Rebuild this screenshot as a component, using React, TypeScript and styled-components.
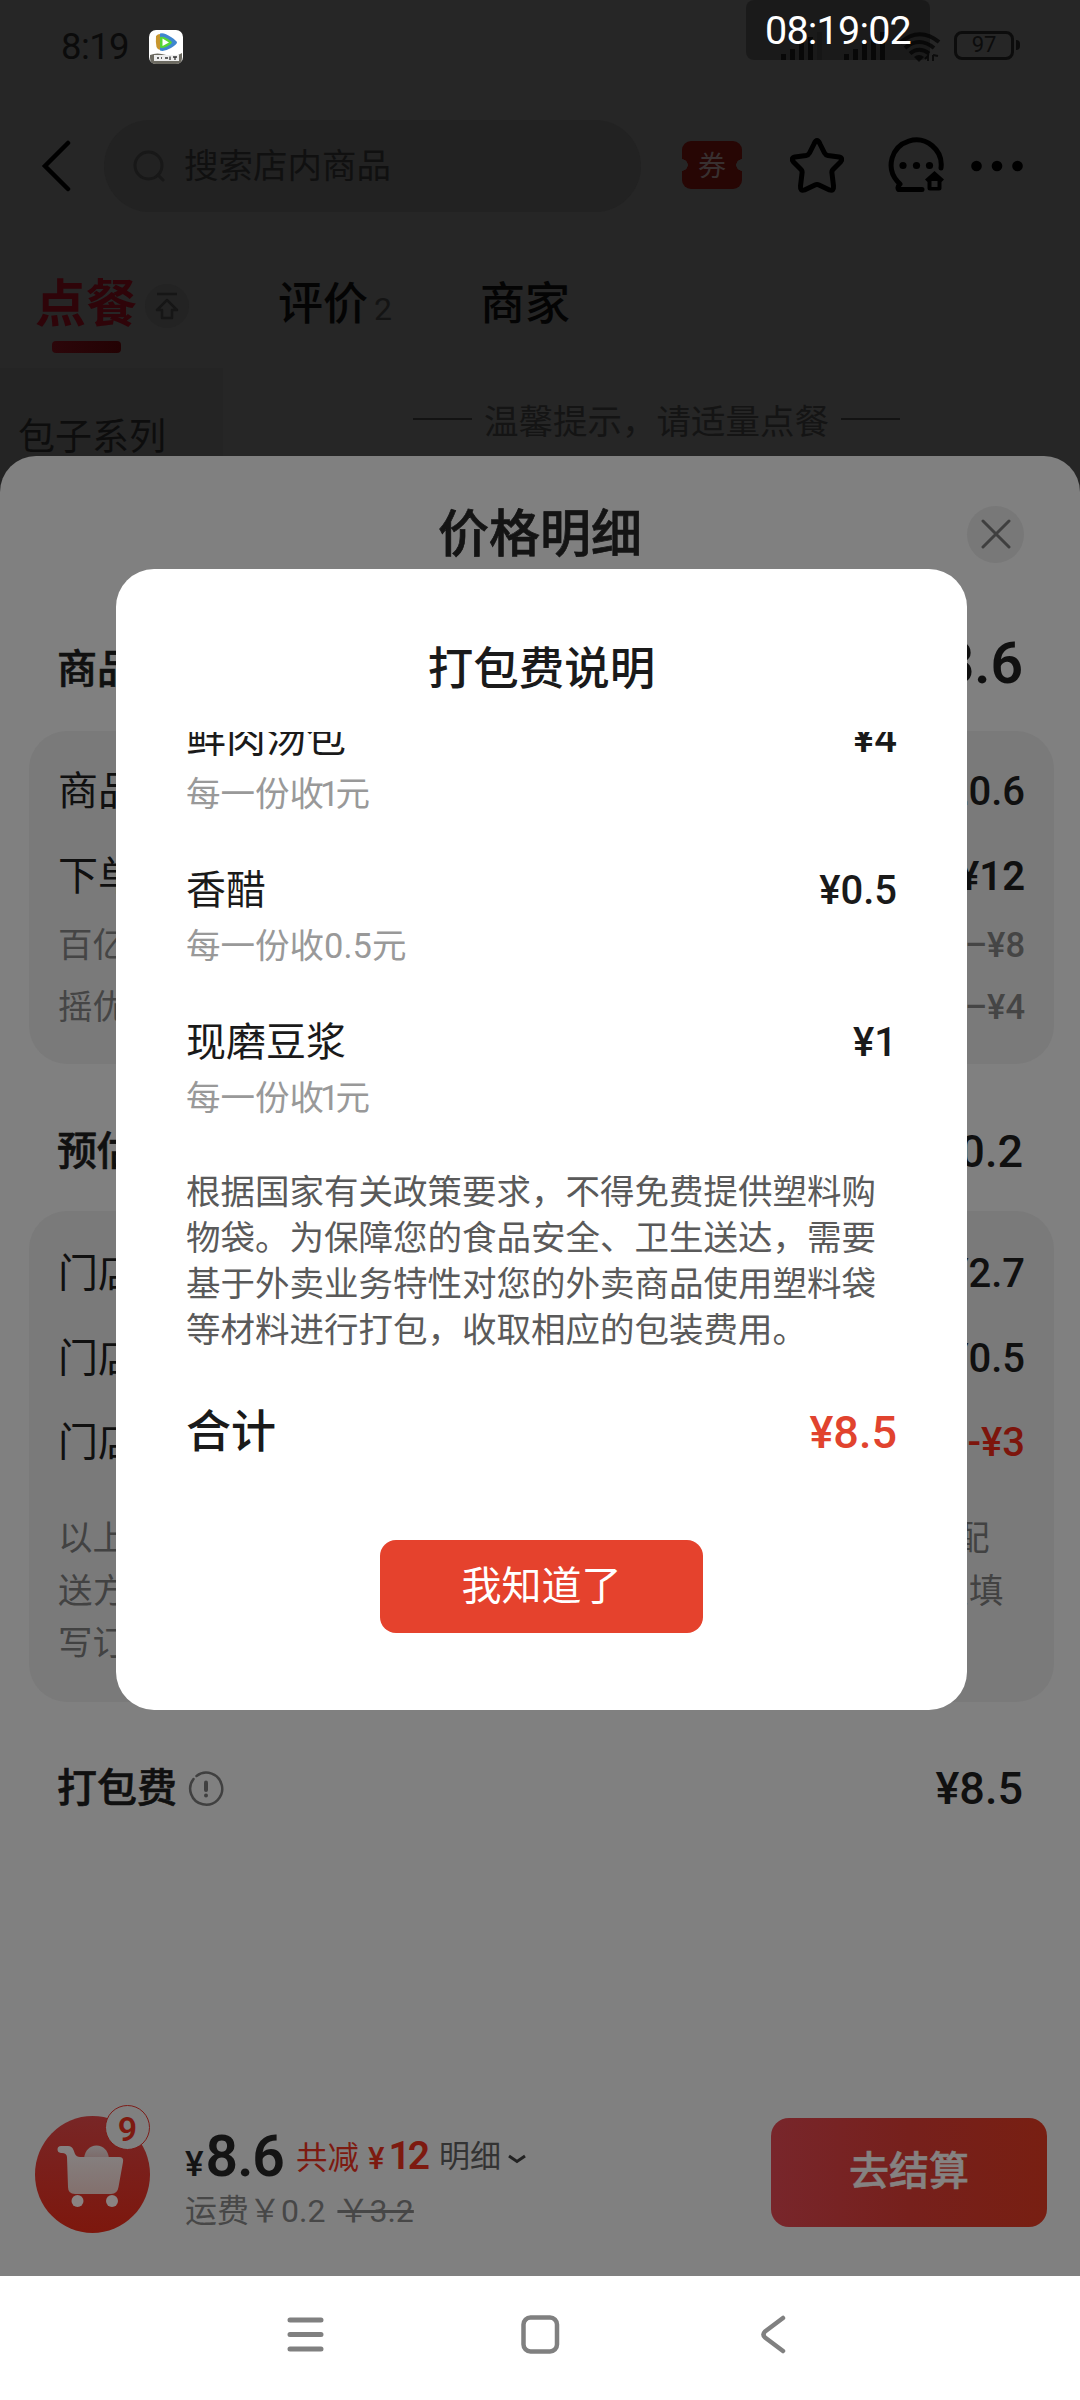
import React from 'react';
import styled, { createGlobalStyle } from 'styled-components';

const GlobalStyle = createGlobalStyle`
  * { box-sizing: border-box; }
  body { margin: 0; background: #262626; }
  svg { display: block; flex: none; }
`;

const Screen = styled.div`
  position: relative;
  width: 1080px;
  height: 2400px;
  overflow: hidden;
  display: flex;
  flex-direction: column;
  background: #262626;
  font-family: Roboto, 'Noto Sans CJK SC', sans-serif;
  color: #141414;
  white-space: nowrap;
`;

/* ---------- store page under the sheet ---------- */

const StatusBar = styled.div`
  height: 94px;
  padding: 0 60px 0 61px;
  display: flex;
  align-items: center;
`;
const Clock = styled.span`
  width: 88px;
  font-size: 36.5px;
  letter-spacing: -0.6px;
  line-height: 94px;
  color: #0b0b0b;
`;
const StatusRight = styled.div`
  margin-left: auto;
  display: flex;
  align-items: center;
`;
const SignalIcons = styled.svg`
  margin-right: 13px;
`;
const Battery = styled.div`
  width: 60px;
  height: 29px;
  margin-top: -4px;
  border: 3px solid #0c0c0c;
  border-radius: 8px;
  display: flex;
  justify-content: center;
  align-items: center;
  font-size: 22px;
  line-height: 24px;
  color: #0c0c0c;
`;
const BatteryTip = styled.div`
  width: 4px;
  height: 10px;
  margin: -4px 0 0 2px;
  border-radius: 0 4px 4px 0;
  background: #0c0c0c;
`;
const TimeChip = styled.div`
  position: absolute;
  left: 746px;
  top: 0;
  width: 184px;
  height: 60px;
  border-radius: 8px;
  background: rgba(0, 0, 0, 0.3);
  color: #fff;
  font-size: 39.5px;
  letter-spacing: -0.8px;
  line-height: 61px;
  text-align: center;
`;

const Header = styled.div`
  height: 144px;
  padding: 0 54px 0 41px;
  display: flex;
  align-items: center;
`;
const SearchBox = styled.div`
  width: 537px;
  height: 92px;
  margin-left: 32px;
  padding-left: 29px;
  border-radius: 46px;
  background: #222222;
  display: flex;
  align-items: center;
  gap: 19px;
  font-size: 34.5px;
  line-height: 92px;
  color: #101010;
`;
const Coupon = styled.div`
  width: 60px;
  height: 48px;
  margin: -3px 45px 0 41px;
  border-radius: 9px;
  background: radial-gradient(circle at 0 50%, #262626 5.5px, transparent 6px),
    radial-gradient(circle at 100% 50%, #262626 5.5px, transparent 6px), #270604;
  color: #383030;
  font-size: 28px;
  line-height: 52px;
  text-align: center;
`;

const Tabs = styled.div`
  height: 130px;
  padding-left: 35px;
  display: flex;
  align-items: flex-start;
  padding-top: 36px;
`;
const ActiveTab = styled.div`
  display: flex;
  flex-direction: column;
  font-size: 51px;
  font-weight: 700;
  line-height: 62px;
  color: #2f0409;
`;
const Underline = styled.div`
  width: 69px;
  height: 12px;
  margin: 5px 0 0 17px;
  border-radius: 4px;
  background: linear-gradient(90deg, #2c060a, #230203);
`;
const TopBadge = styled.div`
  width: 44px;
  height: 44px;
  margin: 10px 0 0 8px;
  border-radius: 50%;
  background: #232323;
  display: flex;
  align-items: center;
  justify-content: center;
`;
const Tab = styled.div<{ $gap: number }>`
  margin-left: ${p => p.$gap}px;
  font-size: 45px;
  font-weight: 500;
  line-height: 61px;
  color: #040404;
`;
const TabCount = styled.span`
  margin-left: 6px;
  font-size: 32px;
  font-weight: 400;
  color: #141414;
`;

const MenuArea = styled.div`
  height: 120px;
  display: flex;
`;
const Category = styled.div`
  width: 223px;
  padding: 39px 0 0 18px;
  background: #242424;
  font-size: 37px;
  line-height: 62px;
  color: #0d0d0d;
`;
const Tip = styled.div`
  margin-left: 190px;
  height: 101px;
  display: flex;
  align-items: center;
  gap: 12px;
  font-size: 34.5px;
  color: #141414;
`;
const TipLine = styled.div`
  width: 59px;
  height: 2px;
  background: #131313;
`;

/* ---------- price sheet ---------- */

const Sheet = styled.div`
  position: absolute;
  left: 0;
  top: 456px;
  width: 1080px;
  height: 1820px;
  border-radius: 36px 36px 0 0;
  background: #808080;
  display: flex;
  flex-direction: column;
`;
const SheetHead = styled.div`
  height: 156px;
  padding: 0 56px 0 113px;
  display: flex;
  align-items: center;
  justify-content: space-between;
`;
const SheetTitle = styled.div`
  flex: 1;
  text-align: center;
  font-size: 51px;
  font-weight: 500;
  -webkit-text-stroke: 0.7px;
  line-height: 159px;
`;
const CloseButton = styled.div`
  width: 57px;
  height: 57px;
  border-radius: 50%;
  background: #787878;
  display: flex;
  align-items: center;
  justify-content: center;
`;
const Line = styled.div<{
  $h: number;
  $size?: number;
  $bold?: boolean;
  $medium?: boolean;
  $inset?: number;
  $shift?: number;
  $color?: string;
}>`
  height: ${p => p.$h}px;
  margin-top: ${p => p.$shift ?? 0}px;
  margin-bottom: ${p => -(p.$shift ?? 0)}px;
  padding: 0 ${p => p.$inset ?? 0}px;
  flex: none;
  display: flex;
  align-items: center;
  font-size: ${p => p.$size ?? 40}px;
  font-weight: ${p => (p.$bold || p.$medium ? 500 : 400)};
  -webkit-text-stroke: ${p => (p.$bold ? '0.6px' : '0')};
  line-height: ${p => p.$h}px;
  color: ${p => p.$color ?? '#101010'};
`;
const Price = styled.span<{ $size?: number; $color?: string; $weight?: number; $lift?: number }>`
  margin-left: auto;
  padding-bottom: ${p => p.$lift ?? 0}px;
  font-size: ${p => p.$size ?? 40}px;
  font-weight: ${p => p.$weight ?? 500};
  -webkit-text-stroke: 0;
  color: ${p => p.$color ?? 'inherit'};
`;
const Card = styled.div<{ $h: number; $pad: number }>`
  width: 1025px;
  height: ${p => p.$h}px;
  margin-left: 29px;
  padding: ${p => p.$pad}px 29px 0 29px;
  border-radius: 38px;
  background: #7a7a7a;
`;
const Note = styled.div`
  margin-top: 27px;
  font-size: 34.5px;
  line-height: 52.5px;
  color: #424242;
`;
const NoteLine = styled.div<{ $track?: number }>`
  letter-spacing: ${p => p.$track ?? 0}px;
`;
const InfoMark = styled.svg`
  margin-left: 11px;
`;

const CartBar = styled.div`
  position: absolute;
  left: 0;
  bottom: 0;
  width: 1080px;
  height: 200px;
  padding: 0 33px 0 35px;
  display: flex;
`;
const CartButton = styled.div`
  position: relative;
  width: 115px;
  height: 117px;
  margin-top: 40px;
  border-radius: 50%;
  background: linear-gradient(#782626, #7d170d);
`;
const Badge = styled.div`
  position: absolute;
  left: 70px;
  top: -11px;
  width: 45px;
  height: 45px;
  border-radius: 50%;
  border: 1.5px solid #7d1c18;
  background: #808080;
  color: #7d1a10;
  font-size: 34px;
  font-weight: 600;
  line-height: 46px;
  text-align: center;
`;
const Totals = styled.div`
  margin-left: 35px;
  padding-top: 41px;
  display: flex;
  flex-direction: column;
`;
const TotalLine = styled.div`
  height: 80px;
  display: flex;
  align-items: baseline;
  line-height: 80px;
`;
const Yen = styled.span`
  font-size: 35px;
  font-weight: 500;
`;
const Total = styled.span`
  margin-left: 2px;
  font-size: 57px;
  font-weight: 600;
  letter-spacing: -1px;
`;
const Saved = styled.span`
  margin-left: 12px;
  position: relative;
  top: -7px;
  font-size: 31.5px;
  color: #7d1a10;
`;
const SavedAmount = styled.b`
  margin-left: 4px;
  font-size: 39px;
  font-weight: 600;
  letter-spacing: -3px;
`;
const SavedYen = styled.b`
  margin-left: 9px;
  font-size: 31px;
  font-weight: 500;
`;
const Detail = styled.span`
  margin-left: 12px;
  position: relative;
  top: -9px;
  font-size: 31px;
  color: #333;
`;
const DetailArrow = styled.svg`
  margin-left: 6px;
`;
const Shipping = styled.div`
  margin-top: -4px;
  font-size: 32px;
  line-height: 36px;
  color: #474747;
`;
const Struck = styled.s`
  margin-left: 12px;
`;
const Checkout = styled.div`
  width: 276px;
  height: 109px;
  margin: 42px 0 0 auto;
  border-radius: 18px;
  background: linear-gradient(90deg, #78262b, #76201c 50%, #781f12);
  color: #858281;
  font-size: 40px;
  font-weight: 500;
  -webkit-text-stroke: 0.6px;
  line-height: 108px;
  text-align: center;
`;

/* ---------- packing fee dialog ---------- */

const Dialog = styled.div`
  position: absolute;
  left: 116px;
  top: 569px;
  width: 851px;
  height: 1141px;
  border-radius: 38px;
  background: #fff;
  padding: 0 70px;
  display: flex;
  flex-direction: column;
  color: #1a1a1a;
`;
const DialogTitle = styled.div`
  flex: none;
  height: 163px;
  padding-top: 38px;
  font-size: 45.5px;
  font-weight: 500;
  line-height: 125px;
  text-align: center;
`;
const Scroller = styled.div`
  flex: none;
  height: 643px;
  overflow: hidden;
`;
const ScrollBody = styled.div`
  margin-top: -23px;
`;
const FeeItem = styled.div`
  height: 152px;
`;
const FeeRule = styled.div`
  font-size: 34.5px;
  line-height: 50px;
  color: #999;
`;
const FeeUnit = styled.span<{ $tight: boolean }>`
  margin: 0 ${p => (p.$tight ? -4 : 0)}px;
`;
const Policy = styled.div`
  margin-top: 4px;
  font-size: 34.5px;
  line-height: 46px;
  color: #5a5a5a;
`;
const Confirm = styled.div`
  flex: none;
  width: 323px;
  height: 93px;
  margin: 49px auto 0;
  border-radius: 16px;
  background: #e5422d;
  color: #fff;
  font-size: 40px;
  line-height: 93px;
  text-align: center;
`;

const NavBar = styled.div`
  height: 124px;
  margin-top: auto;
  padding-bottom: 8px;
  background: #fff;
  display: flex;
  align-items: center;
  justify-content: center;
  gap: 193px;
`;

const fees = [
  { name: '鲜肉汤包', price: '¥4', unit: '1' },
  { name: '香醋', price: '¥0.5', unit: '0.5' },
  { name: '现磨豆浆', price: '¥1', unit: '1' },
];

const policy = [
  '根据国家有关政策要求，不得免费提供塑料购',
  '物袋。为保障您的食品安全、卫生送达，需要',
  '基于外卖业务特性对您的外卖商品使用塑料袋',
  '等材料进行打包，收取相应的包装费用。',
];

const AppBadge = () => (
  <svg width="34" height="34" viewBox="0 0 34 34">
    <rect width="34" height="34" rx="7" fill="#fff" />
    <path d="M1 25 Q8 22 17 25 T33 23 V28 Q33 34 27 34 H7 Q1 34 1 28Z" fill="#6d6b62" />
    <rect x="5" y="25" width="25" height="6" fill="#eee" />
    <path d="M8 28h2M12 28h1M16 28h3M21 26.500v3.500M24 27h4M26 27v3" stroke="#333" strokeWidth="1.3" />
    <path d="M7 6 Q9 3.500 12 4 V20 Q9 20.500 7.500 17 Q6.500 12 7 6Z" fill="#c8962e" />
    <path d="M11 3.500 Q15 2 22 7 Q28 11 28 12.500 Q28 14 22 18 Q15 22 11 20.500Z" fill="#3f86cf" />
    <path d="M11 7 Q14 6 19 9 Q23 11.500 23 12.500 Q22 14.500 17 17 Q13 18.500 11 17.500Z" fill="#56d636" />
    <path d="M13.500 8.500 L20 12.500 L13.500 16Z" fill="#fff" />
  </svg>
);

const Signals = () => (
  <SignalIcons width="164" height="34" viewBox="776 30 164 34">
    <g fill="#0c0c0c">
      <rect x="780" y="54" width="5" height="6" />
      <rect x="789" y="49" width="5" height="11" />
      <rect x="798" y="43" width="5" height="17" />
      <rect x="807" y="37" width="5" height="23" />
      <rect x="816" y="32" width="5" height="28" fill="#202020" />
      <rect x="843" y="54" width="5" height="6" />
      <rect x="852" y="49" width="5" height="11" />
      <rect x="861" y="43" width="5" height="17" />
      <rect x="870" y="37" width="5" height="23" />
      <rect x="879" y="32" width="5" height="28" />
      <path d="M913 57 Q918 53 923 57 L918 62Z" />
      <path d="M927 61v-5l-3 3M932 55v6M932 55l5 1" stroke="#0c0c0c" strokeWidth="2" fill="none" />
    </g>
    <g fill="none" stroke="#0c0c0c" strokeWidth="4">
      <path d="M899 43 Q918 26 938 42" />
      <path d="M904 48 Q918 36 933 48" />
      <path d="M909 53.500 Q918 46 928 53.500" />
    </g>
  </SignalIcons>
);

const CartIcon = () => (
  <svg width="115" height="117" viewBox="35 2116 115 117">
    <defs>
      <linearGradient id="cartFill" x1="0" y1="0" x2="0" y2="1">
        <stop offset="0" stopColor="#858383" />
        <stop offset="1" stopColor="#83706d" />
      </linearGradient>
      <linearGradient id="cartLoad" x1="0" y1="0" x2="0" y2="1">
        <stop offset="0" stopColor="#807c7c" />
        <stop offset="1" stopColor="#7c6a69" />
      </linearGradient>
    </defs>
    <path d="M84 2158 Q86 2146 96.500 2145.500 Q107 2146 109 2158Z" fill="url(#cartLoad)" />
    <path
      d="M61 2146 H68 Q72 2146 73.500 2150 L75 2154 Q76.500 2157 80 2157 H119 Q124 2157 123 2162 L118.500 2187 Q117.500 2194 111 2194 H75 Q68 2194 68 2187 L67 2157 Q66.500 2153 62 2153 H61 Q57.500 2152.500 57.500 2149.500 Q57.500 2146 61 2146Z"
      fill="url(#cartFill)"
    />
    <circle cx="77.500" cy="2201" r="6" fill="#8a8382" />
    <circle cx="112" cy="2201" r="6" fill="#8a8382" />
  </svg>
);

const ChatIcon = styled.svg`
  margin-left: 39px;
`;
const MoreIcon = styled.svg`
  margin-left: 22px;
`;

export default function App() {
  return (
    <Screen>
      <GlobalStyle />
      <StatusBar>
        <Clock>8:19</Clock>
        <AppBadge />
        <StatusRight>
          <Signals />
          <Battery>97</Battery>
          <BatteryTip />
        </StatusRight>
      </StatusBar>

      <Header>
        <svg width="31" height="52" viewBox="0 0 31 52" fill="none" stroke="#000" strokeWidth="4.500" strokeLinecap="round">
          <path d="M27 3 L4 26 L27 49" />
        </svg>
        <SearchBox>
          <svg width="32" height="32" viewBox="0 0 32 32" fill="none" stroke="#181818" strokeWidth="3">
            <circle cx="15.500" cy="15.500" r="13.500" />
            <path d="M25 25 L30 30" strokeLinecap="round" />
          </svg>
          搜索店内商品
        </SearchBox>
        <Coupon>券</Coupon>
        <svg width="60" height="60" viewBox="787 136 60 60" fill="none" stroke="#000" strokeWidth="5" strokeLinejoin="round">
          <path d="M817 140.500 Q818.500 140.500 820 144 L824.500 153 Q825.500 155 828 155.500 L839 157 Q843.500 158 840.500 162 L833 169.500 Q831.500 171 832 173.500 L833.500 186 Q834 191.500 829.500 190 L819 185 Q817 184 815 185 L804.500 190 Q800 191.500 800.500 186 L802 173.500 Q802.500 171 801 169.500 L793.500 162 Q790.500 158 795 157 L806 155.500 Q808.500 155 809.500 153 L814 144 Q815.500 140.500 817 140.500Z" />
        </svg>
        <ChatIcon width="62" height="60" viewBox="885 136 62 60">
          <path d="M940 168 A25 25 0 1 0 896.500 181.500 L899 184 Q896 187 897.500 189.500 H921" fill="none" stroke="#000" strokeWidth="5" strokeLinecap="round" strokeLinejoin="round" />
          <circle cx="902" cy="165.500" r="3.600" />
          <circle cx="915.500" cy="165.500" r="3.600" />
          <circle cx="928.500" cy="165.500" r="3.600" />
          <path d="M933.500 171 L943 179.500 L940.500 182 V188 Q940.500 190.500 938 190.500 H929 Q926.500 190.500 926.500 188 V182 L924 179.500Z" />
          <rect x="930.500" y="181" width="6" height="6" fill="#262626" />
        </ChatIcon>
        <MoreIcon width="54" height="14" viewBox="0 0 54 14">
          <circle cx="6.500" cy="7" r="5.300" />
          <circle cx="27" cy="7" r="5.300" />
          <circle cx="47.500" cy="7" r="5.300" />
        </MoreIcon>
      </Header>

      <Tabs>
        <ActiveTab>
          点餐
          <Underline />
        </ActiveTab>
        <TopBadge>
          <svg width="26" height="30" viewBox="0 0 26 30" fill="none" stroke="#161616" strokeWidth="2.500" strokeLinejoin="round">
            <path d="M3 3 H23" />
            <path d="M13 9 L23 19 H18 V27 H8 V19 H3Z" />
          </svg>
        </TopBadge>
        <Tab $gap={89}>
          评价
          <TabCount>2</TabCount>
        </Tab>
        <Tab $gap={88}>商家</Tab>
      </Tabs>

      <MenuArea>
        <Category>包子系列</Category>
        <Tip>
          <TipLine />
          温馨提示，请适量点餐
          <TipLine />
        </Tip>
      </MenuArea>

      <NavBar>
        <svg width="42" height="42" viewBox="0 0 42 42" stroke="#808080" strokeWidth="5" strokeLinecap="round">
          <path d="M6 7 H37 M6 21.500 H37 M6 36 H37" />
        </svg>
        <svg width="42" height="42" viewBox="0 0 42 42" fill="none" stroke="#808080" strokeWidth="4.500">
          <rect x="4.500" y="4.500" width="33.500" height="34" rx="7" />
        </svg>
        <svg width="42" height="42" viewBox="0 0 42 42" fill="none" stroke="#808080" strokeWidth="4.500" strokeLinecap="round" strokeLinejoin="round">
          <path d="M29 5 L11 18.500 Q8 21.500 11 24.500 L29 38" />
        </svg>
      </NavBar>

      <Sheet>
        <SheetHead>
          <SheetTitle>价格明细</SheetTitle>
          <CloseButton>
            <svg width="30" height="30" viewBox="0 0 30 30" stroke="#3f3f3f" strokeWidth="3" strokeLinecap="round">
              <path d="M2 2 L28 28 M28 2 L2 28" />
            </svg>
          </CloseButton>
        </SheetHead>
        <Line $h={119} $bold $inset={57} $shift={-2}>
          商品金额
          <Price $size={57} $weight={600} $lift={12}>¥8.6</Price>
        </Line>
        <Card $h={333} $pad={18}>
          <Line $h={85}>商品原价<Price>¥20.6</Price></Line>
          <Line $h={85}>下单优惠<Price $weight={600}>¥12</Price></Line>
          <Line $h={52} $size={34.5} $color="#454545">百亿补贴<Price $size={34.5}>–¥8</Price></Line>
          <Line $h={73} $size={34.5} $color="#454545">摇优惠券<Price $size={34.5}>–¥4</Price></Line>
        </Card>
        <Line $h={147} $bold $inset={57} $shift={14}>
          预估运费
          <Price $size={45}>¥0.2</Price>
        </Line>
        <Card $h={491} $pad={21}>
          <Line $h={84}>门店运费<Price>¥2.7</Price></Line>
          <Line $h={85}>门店服务费<Price>¥0.5</Price></Line>
          <Line $h={84}>门店减免<Price $color="#7d150c">-¥3</Price></Line>
          <Note>
            <NoteLine>以上为预估运费，实际金额会因商品重量、收货地址或不同配</NoteLine>
            <NoteLine $track={0.54}>送方式等因素发生变化，您所需要支付的最终运费金额请以填</NoteLine>
            <NoteLine>写订单页为准</NoteLine>
          </Note>
        </Card>
        <Line $h={173} $bold $inset={57}>
          打包费
          <InfoMark width="36" height="36" viewBox="0 0 36 36" fill="none" stroke="#404040" strokeWidth="2.500" strokeLinecap="round">
            <path d="M8.500 5 A16 16 0 1 1 5.500 8" />
            <path d="M18 11.500 V19" strokeWidth="4" />
            <circle cx="18" cy="24.500" r="2" fill="#404040" stroke="none" />
          </InfoMark>
          <Price $size={45}>¥8.5</Price>
        </Line>
        <CartBar>
          <CartButton>
            <CartIcon />
            <Badge>9</Badge>
          </CartButton>
          <Totals>
            <TotalLine>
              <Yen>¥</Yen>
              <Total>8.6</Total>
              <Saved>
                共减<SavedYen>¥</SavedYen>
                <SavedAmount>12</SavedAmount>
              </Saved>
              <Detail>明细</Detail>
              <DetailArrow width="20" height="30" viewBox="0 0 20 30" fill="none" stroke="#222" strokeWidth="3">
                <path d="M2 10 L10 15.500 L18 10" />
              </DetailArrow>
            </TotalLine>
            <Shipping>
              运费￥0.2<Struck>￥3.2</Struck>
            </Shipping>
          </Totals>
          <Checkout>去结算</Checkout>
        </CartBar>
      </Sheet>

      <Dialog>
        <DialogTitle>打包费说明</DialogTitle>
        <Scroller>
          <ScrollBody>
            {fees.map(f => (
              <FeeItem key={f.name}>
                <Line $h={60} $color="#1a1a1a">
                  {f.name}
                  <Price>{f.price}</Price>
                </Line>
                <FeeRule>
                  每一份收<FeeUnit $tight={f.unit === '1'}>{f.unit}</FeeUnit>元
                </FeeRule>
              </FeeItem>
            ))}
            <Policy>
              {policy.map(t => (
                <div key={t}>{t}</div>
              ))}
            </Policy>
          </ScrollBody>
        </Scroller>
        <Line $h={116} $size={45} $medium $color="#1a1a1a">
          合计
          <Price $size={45} $color="#e1432e">¥8.5</Price>
        </Line>
        <Confirm>我知道了</Confirm>
      </Dialog>

      <TimeChip>08:19:02</TimeChip>
    </Screen>
  );
}
